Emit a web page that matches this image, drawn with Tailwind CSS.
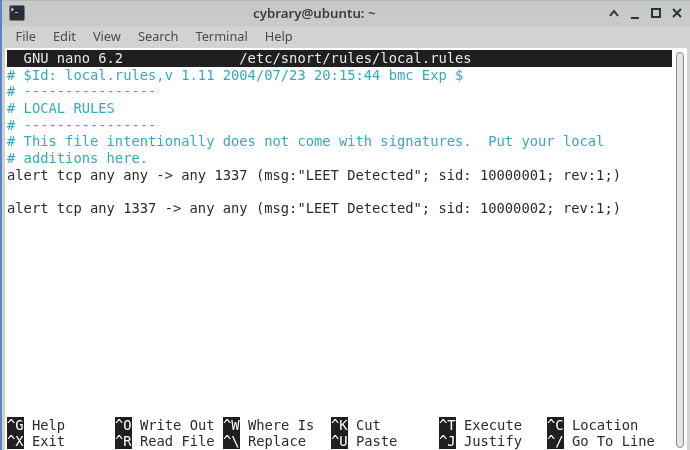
<!DOCTYPE html>
<html>
<head>
<script src="https://cdn.jsdelivr.net/npm/@tailwindcss/browser@4"></script>
</head>
<body class="m-0 bg-[#d0d3cf]">
<div class="w-[690px] h-[450px] overflow-hidden flex flex-col bg-[#d0d3cf] border-l-2 border-[#5b86c4] font-['Liberation_Sans',sans-serif] blur-[0.35px]">
  <div class="h-[26px] shrink-0 flex items-center relative bg-gradient-to-b from-[#c6c9c5] to-[#c8cbc7] border-t border-[#b4b7b4]">
    <div class="absolute left-[7px] top-[4px] w-[16px] h-[16px] rounded-[2px] bg-[#2a2c3a] border border-[#777]">
      <svg width="14" height="14" viewBox="0 0 14 14"><path d="M1.5 2l2 1.5-2 1.5" stroke="#ddd" fill="#ddd" stroke-width="1"/><path d="M5 6.5h3" stroke="#bbb" stroke-width="1"/></svg>
    </div>
    <div class="w-full pl-[251px] text-[13.25px] text-[#3a3d3c] font-['Noto_Sans',sans-serif] font-semibold leading-none">cybrary@ubuntu: ~</div>
    <div class="absolute right-[6px] top-[5px] flex gap-[7px] items-center">
      <svg width="14" height="14" viewBox="0 0 14 14"><path d="M3 10l4-5 4 5" stroke="#2e3436" stroke-width="2" fill="none"/></svg>
      <svg width="14" height="14" viewBox="0 0 14 14"><path d="M3 12h8" stroke="#2e3436" stroke-width="2" fill="none"/></svg>
      <svg width="14" height="14" viewBox="0 0 14 14"><rect x="3" y="3" width="8" height="8" stroke="#2e3436" stroke-width="2" fill="none"/></svg>
      <svg width="14" height="14" viewBox="0 0 14 14"><path d="M3 3l8 8M11 3l-8 8" stroke="#2e3436" stroke-width="2" fill="none"/></svg>
    </div>
  </div>
  <div class="h-[22px] shrink-0 flex items-center gap-[17px] pl-[13.5px] text-[12.8px] text-[#4a4d4c] font-['Noto_Sans',sans-serif] bg-[#d0d3cf]">
    <span>File</span><span>Edit</span><span>View</span><span>Search</span><span>Terminal</span><span>Help</span>
  </div>
  <div class="flex-1 flex bg-white ml-[3px] mr-[3px] min-h-0">
    <div class="w-[667px] shrink-0 pl-[2px] pt-[2px] flex flex-col font-['DejaVu_Sans_Mono',monospace] text-[13.79px] leading-[16.67px] whitespace-pre text-[#2b2b2b]">
      <div class="bg-[#1f1f1f] text-[#e8e8e8] h-[16.67px] shrink-0">  GNU nano 6.2              /etc/snort/rules/local.rules</div>
      <div class="text-[#36a9bd]"># $Id: local.rules,v 1.11 2004/07/23 20:15:44 bmc Exp $</div>
      <div class="text-[#36a9bd]"># ----------------</div>
      <div class="text-[#36a9bd]"># LOCAL RULES</div>
      <div class="text-[#36a9bd]"># ----------------</div>
      <div class="text-[#36a9bd]"># This file intentionally does not come with signatures.  Put your local</div>
      <div class="text-[#36a9bd]"># additions here.</div>
      <div>alert tcp any any -&gt; any 1337 (msg:"LEET Detected"; sid: 10000001; rev:1;)</div>
      <div class="h-[16.67px]"></div>
      <div>alert tcp any 1337 -&gt; any any (msg:"LEET Detected"; sid: 10000002; rev:1;)</div>
      <div class="mt-auto grid grid-cols-[108px_108px_108px_108px_108px_108px]">
        <div><span class="bg-[#1f1f1f] text-white">^G</span> Help</div>
        <div><span class="bg-[#1f1f1f] text-white">^O</span> Write Out</div>
        <div><span class="bg-[#1f1f1f] text-white">^W</span> Where Is</div>
        <div><span class="bg-[#1f1f1f] text-white">^K</span> Cut</div>
        <div><span class="bg-[#1f1f1f] text-white">^T</span> Execute</div>
        <div><span class="bg-[#1f1f1f] text-white">^C</span> Location</div>
        <div><span class="bg-[#1f1f1f] text-white">^X</span> Exit</div>
        <div><span class="bg-[#1f1f1f] text-white">^R</span> Read File</div>
        <div><span class="bg-[#1f1f1f] text-white">^\</span> Replace</div>
        <div><span class="bg-[#1f1f1f] text-white">^U</span> Paste</div>
        <div><span class="bg-[#1f1f1f] text-white">^J</span> Justify</div>
        <div><span class="bg-[#1f1f1f] text-white">^/</span> Go To Line</div>
      </div>
    </div>
    <div class="flex-1 pl-[4px] py-[4px] pb-[2px] flex">
      <div class="w-[8px] h-full rounded-[4px] bg-[#e3e5e3] border border-[#8a8d8a]"></div>
    </div>
  </div>
</div>
</body>
</html>
